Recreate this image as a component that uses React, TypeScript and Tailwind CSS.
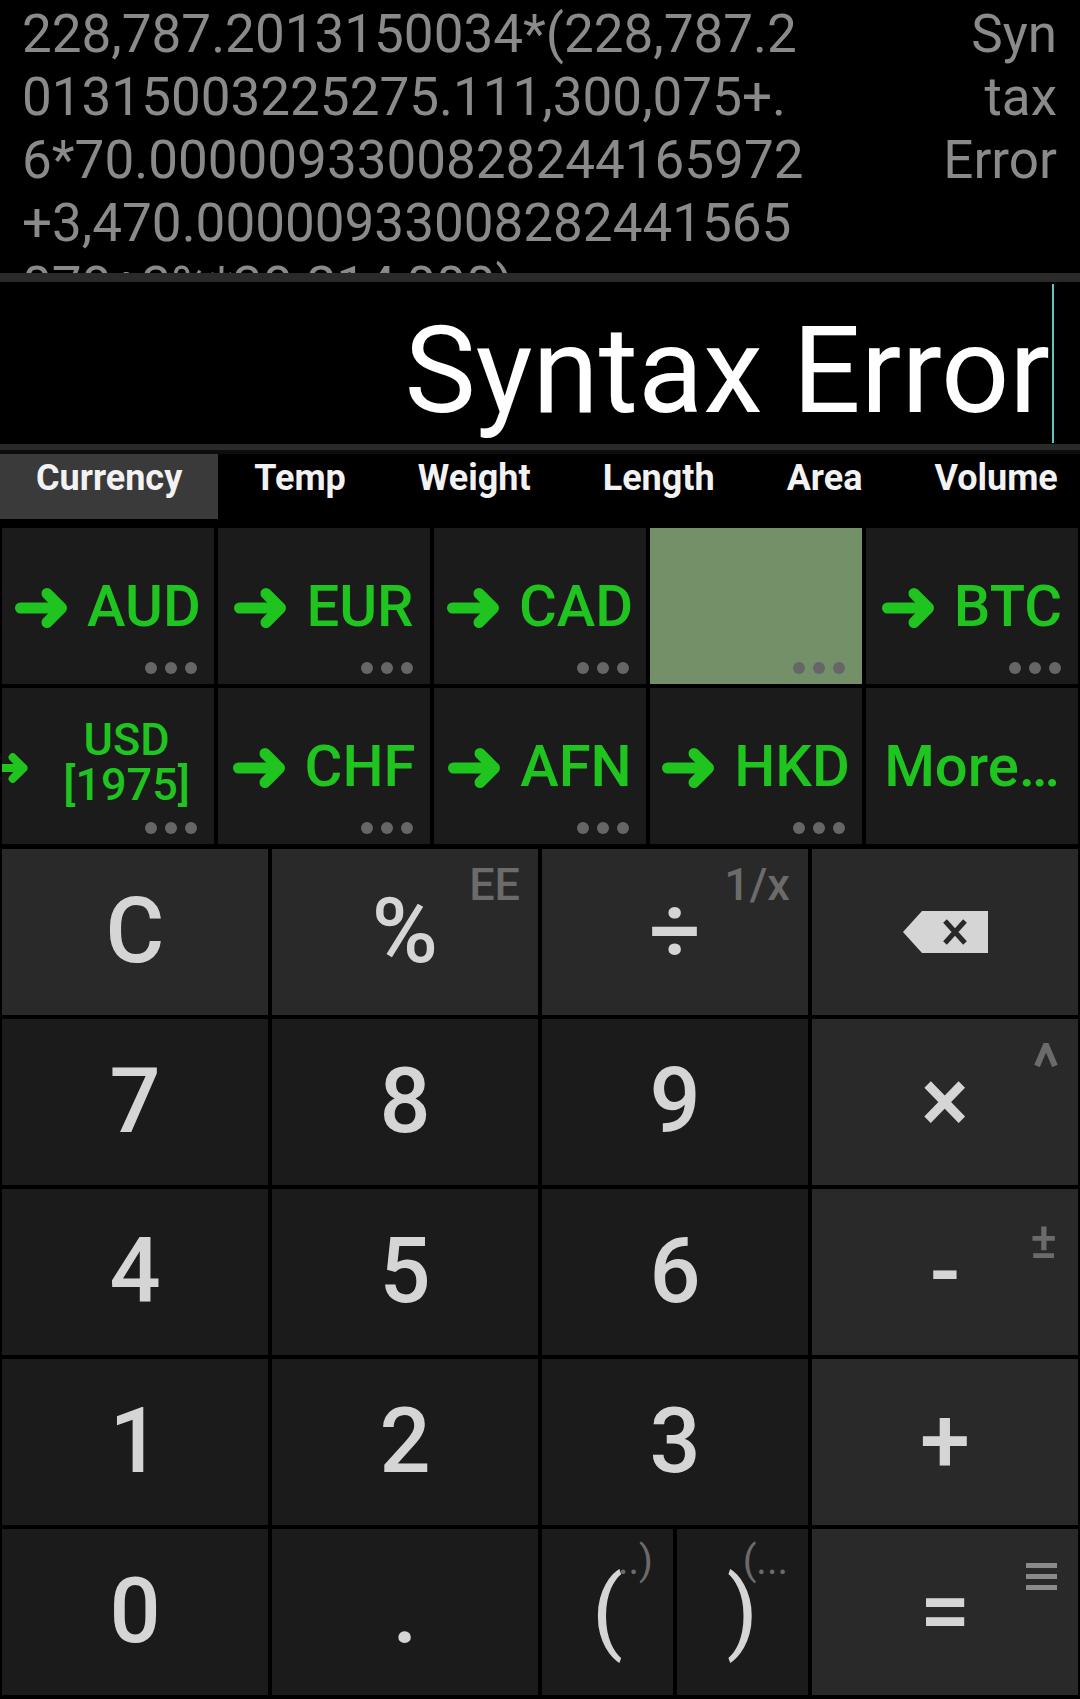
import React from 'react';

const GREEN = '#1fc41f';

const Arrow = ({ className }: { className?: string }) => (
  <svg
    viewBox="0 0 54 40"
    className={className}
    fill="none"
    stroke={GREEN}
    strokeWidth="11"
    strokeLinecap="round"
    strokeLinejoin="round"
  >
    <path d="M5.5 20H45" />
    <path d="M32 5.5L46.5 20L32 34.5" />
  </svg>
);

const Dots = () => (
  <div className="absolute right-[17px] bottom-[10px] flex gap-[8px]">
    <span className="w-[12px] h-[12px] rounded-full bg-[#666666]" />
    <span className="w-[12px] h-[12px] rounded-full bg-[#666666]" />
    <span className="w-[12px] h-[12px] rounded-full bg-[#666666]" />
  </div>
);

const History = () => (
  <div className="h-[273px] shrink-0 overflow-hidden flex justify-between pl-[22px] pr-[23px] pt-[3px] text-[53px] leading-[63px] text-[#8a8a8a] whitespace-nowrap">
    <div>
      <div>228,787.2013150034*(228,787.2</div>
      <div>01315003225275.111,300,075+.</div>
      <div>6*70.0000093300828244165972</div>
      <div>+3,470.00000933008282441565</div>
      <div>078+3%*38.214,000)</div>
    </div>
    <div className="text-right">
      <div>Syn</div>
      <div>tax</div>
      <div>Error</div>
    </div>
  </div>
);

const Display = () => (
  <div className="h-[162px] shrink-0 overflow-hidden flex justify-end items-start pr-[26px]">
    <span className="text-[120px] leading-[178px] text-white">Syntax Error</span>
    <span className="w-[2px] h-[159px] mt-[2px] ml-[2px] bg-[#5ec4c4]" />
  </div>
);

const tabs = ['Currency', 'Temp', 'Weight', 'Length', 'Area', 'Volume'];

const Tabs = () => (
  <div className="h-[74px] shrink-0 border-t-[4px] border-[#0d0d0d] flex text-[36px] font-bold text-[#f2f2f2] whitespace-nowrap overflow-hidden">
    {tabs.map((t, i) => (
      <div
        key={t}
        className={
          i === 0
            ? 'h-[65px] px-[36px] pt-[3px] leading-[42px] bg-[#3a3a3a]'
            : 'h-[65px] px-[36px] pt-[3px] leading-[42px]'
        }
      >
        {t}
      </div>
    ))}
  </div>
);

const CurrencyCell = ({ code }: { code: string }) => (
  <div className="relative h-[156px] bg-[#1b1b1b] overflow-hidden flex items-center justify-center gap-[18px]">
    <Arrow className="w-[54px] h-[40px] mt-[4px] shrink-0" />
    <span className="text-[58px] leading-none font-medium text-[#1fc41f]">{code}</span>
    <Dots />
  </div>
);

const CurrencyGrid = () => (
  <div className="shrink-0 grid grid-cols-5 gap-[4px] px-[2px] pt-[4px]">
    <CurrencyCell code="AUD" />
    <CurrencyCell code="EUR" />
    <CurrencyCell code="CAD" />
    <div className="relative h-[156px] bg-[#739069]">
      <Dots />
    </div>
    <CurrencyCell code="BTC" />

    <div className="relative h-[156px] bg-[#1b1b1b] overflow-hidden flex items-center justify-end pr-[24px] gap-[34px]">
      <Arrow className="w-[40px] h-[30px] mt-[4px] shrink-0" />
      <div className="text-[45px] leading-[45px] font-medium text-[#1fc41f] text-center mb-[8px] whitespace-nowrap">
        <div>USD</div>
        <div>[1975]</div>
      </div>
      <Dots />
    </div>
    <CurrencyCell code="CHF" />
    <CurrencyCell code="AFN" />
    <CurrencyCell code="HKD" />
    <div className="h-[156px] bg-[#1b1b1b] flex items-center justify-center">
      <span className="text-[58px] leading-none font-medium text-[#1fc41f] whitespace-nowrap">More…</span>
    </div>
  </div>
);

type KeyProps = {
  children?: React.ReactNode;
  light?: boolean;
  className?: string;
  extra?: React.ReactNode;
};

const Key = ({ children, light, className, extra }: KeyProps) => (
  <div
    className={`relative h-[166px] flex items-center justify-center text-[90px] leading-none text-[#d5d5d5] ${
      light ? 'bg-[#292929]' : 'bg-[#1b1b1b]'
    } ${className ?? ''}`}
  >
    <span>{children}</span>
    {extra}
  </div>
);

const Label = ({ children, className }: { children: React.ReactNode; className: string }) => (
  <span className={`absolute leading-none text-[#6b6b6b] ${className}`}>{children}</span>
);

const Backspace = () => (
  <svg viewBox="0 0 85 42" className="w-[85px] h-[42px]">
    <path d="M0 21L19 0H85V42H19Z" fill="#d5d5d5" />
    <path
      d="M42 10L62 32M62 10L42 32"
      stroke="#292929"
      strokeWidth="5"
      strokeLinecap="butt"
    />
  </svg>
);

const Caret = () => (
  <svg viewBox="0 0 24 24" className="absolute top-[24px] right-[20px] w-[24px] h-[24px]">
    <path d="M3 23L12 2L21 23" fill="none" stroke="#6b6b6b" strokeWidth="6" />
  </svg>
);

const Keypad = () => (
  <div className="shrink-0 grid grid-cols-4 gap-[4px] px-[2px] pt-[5px] font-medium">
    <Key light>C</Key>
    <Key light extra={<Label className="top-[13px] right-[18px] text-[45px]">EE</Label>}>%</Key>
    <Key light extra={<Label className="top-[13px] right-[18px] text-[45px]">1/x</Label>}>÷</Key>
    <Key light>
      <Backspace />
    </Key>

    <Key>7</Key>
    <Key>8</Key>
    <Key>9</Key>
    <Key light extra={<Caret />}>×</Key>

    <Key>4</Key>
    <Key>5</Key>
    <Key>6</Key>
    <Key light extra={<Label className="top-[27px] right-[21px] text-[50px]">±</Label>}>-</Key>

    <Key>1</Key>
    <Key>2</Key>
    <Key>3</Key>
    <Key light>+</Key>

    <Key>0</Key>
    <Key>.</Key>
    <div className="grid grid-cols-2 gap-[4px]">
      <Key
        className="font-normal"
        extra={<Label className="top-[12px] right-[20px] text-[40px] font-normal">..)</Label>}
      >
        (
      </Key>
      <Key
        className="font-normal"
        extra={<Label className="top-[12px] right-[20px] text-[40px] font-normal">(...</Label>}
      >
        )
      </Key>
    </div>
    <Key
      light
      extra={
        <div className="absolute top-[34px] right-[21px] flex flex-col gap-[6px]">
          <span className="w-[31px] h-[5px] bg-[#8a8a8a]" />
          <span className="w-[31px] h-[5px] bg-[#8a8a8a]" />
          <span className="w-[31px] h-[5px] bg-[#8a8a8a]" />
        </div>
      }
    >
      =
    </Key>
  </div>
);

export default function App() {
  return (
    <div className="w-[1080px] h-[1699px] bg-black overflow-hidden flex flex-col font-['Roboto',sans-serif]">
      <History />
      <div className="h-[9px] shrink-0 bg-[#2a2a2a]" />
      <Display />
      <div className="h-[6px] shrink-0 bg-[#2a2a2a]" />
      <Tabs />
      <CurrencyGrid />
      <Keypad />
    </div>
  );
}
